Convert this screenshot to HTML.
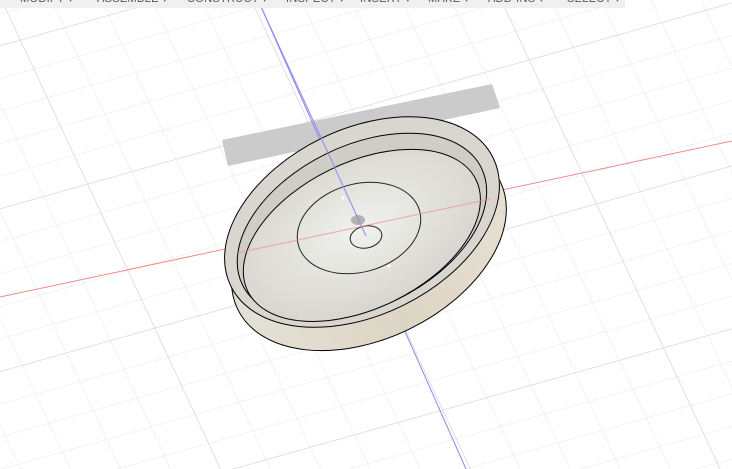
<!DOCTYPE html>
<html><head><style>
html,body{margin:0;padding:0;background:#fff;overflow:hidden}
.tb{position:absolute;left:0;top:0;width:625px;height:8px;background:#f0f0f0;overflow:hidden;font:11px "Liberation Sans",sans-serif;color:#555}
.tb span{position:absolute;top:-8px;letter-spacing:0.3px}
</style></head><body>
<svg width="732" height="469" style="position:absolute;left:0;top:0">
<defs>
<pattern id="g" width="46" height="32" patternUnits="userSpaceOnUse" patternTransform="matrix(0.96,-0.27,0.42,0.9,20,40)">
<path d="M0 0H46M0 0V32" stroke="#e6e6e6" stroke-width="1.1" fill="none"/>
</pattern>
<pattern id="g2" width="230" height="160" patternUnits="userSpaceOnUse" patternTransform="matrix(0.96,-0.27,0.42,0.9,20,40)">
<path d="M0 0H230M0 0V160" stroke="#cfcfcf" stroke-width="1.1" fill="none"/>
</pattern>
<radialGradient id="fl" cx="0.5" cy="0.45" r="0.6"><stop offset="0" stop-color="#f1f1ee"/><stop offset="1" stop-color="#d4d3cc"/></radialGradient>
<linearGradient id="wall" x1="0" y1="0" x2="1" y2="0"><stop offset="0" stop-color="#e4e0d6"/><stop offset="0.5" stop-color="#ddd5c4"/><stop offset="1" stop-color="#e6e0d4"/></linearGradient>
</defs>
<rect width="732" height="469" fill="url(#g)"/>
<rect width="732" height="469" fill="url(#g2)"/>
<line x1="0" y1="297" x2="732" y2="141" stroke="#f08a8a" stroke-width="1"/>
<polygon points="222,140 492,84 500,108 228,166" fill="#cbcbcb"/>
<line x1="258" y1="0" x2="466" y2="469" stroke="#8a8af0" stroke-width="1"/>
<g transform="translate(362,222) rotate(-26)">
<ellipse cx="-4" cy="24" rx="146" ry="93" fill="url(#wall)" stroke="#000" stroke-width="1"/>
<rect x="-146" y="0" width="288" height="24" fill="url(#wall)"/>
<ellipse cx="0" cy="0" rx="146" ry="93" fill="#d8d6ce" stroke="#000" stroke-width="1"/>
<ellipse cx="-2" cy="4" rx="133" ry="81" fill="#cfcdc6" stroke="#000" stroke-width="1"/>
<ellipse cx="-6" cy="12" rx="127" ry="73" fill="url(#fl)" stroke="#000" stroke-width="1"/>
</g>
<ellipse cx="359" cy="228" rx="63" ry="44" transform="rotate(-16 359 228)" fill="none" stroke="#222" stroke-width="1"/>
<ellipse cx="366" cy="237" rx="16" ry="11" transform="rotate(-12 366 237)" fill="none" stroke="#222" stroke-width="1"/>
<ellipse cx="358" cy="220" rx="7" ry="5" fill="#999" opacity="0.7"/>
<line x1="258" y1="0" x2="366" y2="236" stroke="#8a8af0" stroke-width="1"/>
<line x1="237" y1="253" x2="490" y2="199" stroke="#f08a8a" stroke-width="1" opacity="0.7"/>
<circle cx="343" cy="198" r="1.5" fill="#fff"/>
<circle cx="389" cy="266" r="1.5" fill="#fff"/>
</svg>
<div class="tb">
<span style="left:20px">MODIFY ▾</span><span style="left:97px">ASSEMBLE ▾</span><span style="left:187px">CONSTRUCT ▾</span><span style="left:286px">INSPECT ▾</span><span style="left:360px">INSERT ▾</span><span style="left:428px">MAKE ▾</span><span style="left:488px">ADD-INS ▾</span><span style="left:567px">SELECT ▾</span>
</div>
</body></html>
